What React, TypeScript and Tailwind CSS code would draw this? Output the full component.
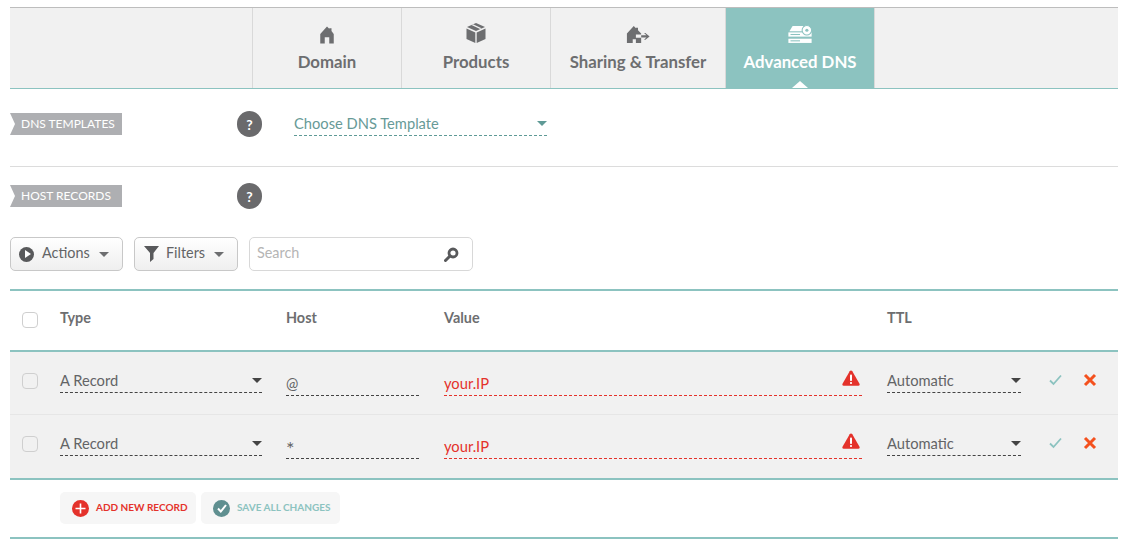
const teal = "#8cc3c0";

function HouseIcon() {
  return (
    <svg width="18" height="18" viewBox="0 0 16 16" fill="#6d6e70">
      <path d="M8 0.5 L10 2.5 V2 H12 V4.5 L14 7 V15.5 H10 V10 H6 V15.5 H2 V7 Z" />
    </svg>
  );
}

function BoxIcon() {
  return (
    <svg width="22" height="22" viewBox="0 0 22 22" fill="#6d6e70">
      <path d="M11 1 L20 5 L11 9 L2 5 Z" />
      <path d="M1.5 6.5 L10.3 10.4 V21 L1.5 17 Z" />
      <path d="M20.5 6.5 L11.7 10.4 V21 L20.5 17 Z" />
      <path d="M6.5 3 L15 7 L16.5 6.3 L8 2.3 Z" fill="#f1f1f1" />
    </svg>
  );
}

function TransferIcon() {
  return (
    <svg width="26" height="19" viewBox="0 0 24 18" fill="#6d6e70">
      <path d="M8 1 L10 3 V2.5 H12 V5 L15 8 V9 H10 V12 H15 V17 H10 V13.5 H7 V17 H1.5 V8 Z" />
      <path d="M15 9.8 H20 L17.7 7.5 H19 L23 10.8 L19 14 H17.7 L20 11.8 H15 Z" />
    </svg>
  );
}

function DnsIcon() {
  return (
    <svg width="26" height="19" viewBox="0 0 24 18" fill="#ffffff">
      <path d="M5 1 H15 L17 6 H2 Z" />
      <rect x="1" y="7" width="22" height="4" />
      <rect x="1" y="13" width="22" height="4" />
      <circle cx="18.5" cy="5" r="4.5" stroke={teal} strokeWidth="1" />
      <circle cx="18.5" cy="5" r="1.5" fill={teal} />
      <rect x="3" y="8.5" width="9" height="1" fill={teal} />
      <rect x="3" y="14.5" width="9" height="1" fill={teal} />
    </svg>
  );
}

function Caret({ className }: { className: string }) {
  return <span className={`h-0 w-0 border-x-[5px] border-t-[5px] border-x-transparent ${className}`} />;
}

function Tab({ label, icon, active, width }: { label: string; icon: React.ReactNode; active?: boolean; width: string }) {
  return (
    <div
      className={`relative flex h-full flex-col items-center border-r border-[#d9d9d9] ${width} ${
        active ? "bg-[#8cc3c0] text-white" : "text-[#6d6e70]"
      }`}
    >
      <div className="flex h-[36px] items-end justify-center">{icon}</div>
      <div className="mt-[8px] text-[16.8px] leading-[20px] font-bold whitespace-nowrap">{label}</div>
      {active && (
        <span className="absolute bottom-0 left-1/2 h-0 w-0 -translate-x-1/2 border-x-[8px] border-b-[7px] border-x-transparent border-b-white" />
      )}
    </div>
  );
}

function SectionLabel({ text, width }: { text: string; width: string }) {
  return (
    <div className={`relative flex h-[22px] items-center bg-[#aeafb2] pl-[11px] text-[12px] text-white ${width}`}>
      <span className="absolute top-0 left-0 h-0 w-0 border-y-[11px] border-l-[5px] border-y-transparent border-l-white" />
      {text}
    </div>
  );
}

function HelpBadge() {
  return (
    <div className="flex h-[26px] w-[25px] items-center justify-center rounded-full bg-[#6a6a6c] text-[14px] font-bold text-white">
      ?
    </div>
  );
}

function Checkbox() {
  return <div className="h-[16px] w-[16px] rounded-[4px] border border-[#cfcfcf] bg-transparent" />;
}

function WarnIcon() {
  return (
    <svg width="18" height="16" viewBox="0 0 18 16">
      <path d="M9 0.5 C9.6 0.5 10 0.8 10.3 1.3 L17.5 13.8 C18 14.8 17.4 15.8 16.4 15.8 H1.6 C0.6 15.8 0 14.8 0.5 13.8 L7.7 1.3 C8 0.8 8.4 0.5 9 0.5 Z" fill="#e4322b" />
      <rect x="8" y="4.5" width="2" height="6.5" rx="0.8" fill="#fff" />
      <rect x="8" y="12" width="2" height="2" rx="0.8" fill="#fff" />
    </svg>
  );
}

function RecordRow({ host, hostClass, border }: { host: string; hostClass: string; border?: boolean }) {
  return (
    <div className={`flex h-[63px] items-start ${border ? "border-b border-[#e6e6e6]" : ""}`}>
      <div className="flex w-[40px] justify-center pt-[21px]">
        <Checkbox />
      </div>
      <div className="mt-[18px] ml-[10px] flex h-[23px] w-[202px] items-start justify-between border-b border-dashed border-[#444]">
        <span className="text-[14.7px] leading-[20px] text-[#636466]">A Record</span>
        <Caret className="mt-[8px] border-t-[#444]" />
      </div>
      <div className="mt-[18px] ml-[24px] flex h-[26px] w-[133px] items-start border-b border-dashed border-[#444] text-[#636466]">
        <span className={hostClass}>{host}</span>
      </div>
      <div className="relative mt-[18px] ml-[25px] flex h-[26px] w-[418px] items-end border-b border-dashed border-[#e4322b] pb-[2px] text-[14.7px] leading-[20px] text-[#e4322b]">
        your.IP
        <span className="absolute top-0 right-[2px]">
          <WarnIcon />
        </span>
      </div>
      <div className="mt-[18px] ml-[25px] flex h-[23px] w-[134px] items-start justify-between border-b border-dashed border-[#444]">
        <span className="text-[14.7px] leading-[20px] text-[#636466]">Automatic</span>
        <Caret className="mt-[8px] border-t-[#444]" />
      </div>
      <div className="mt-[21px] ml-[28px] flex items-center gap-[21px]">
        <svg width="13" height="12" viewBox="0 0 13 12" fill="none" stroke={teal} strokeWidth="1.8">
          <path d="M1 6.5 L4.5 10 L12 1.5" />
        </svg>
        <svg width="14" height="14" viewBox="0 0 14 14" fill="none" stroke="#f4511e" strokeWidth="3">
          <path d="M2 2 L12 12 M12 2 L2 12" />
        </svg>
      </div>
    </div>
  );
}

export default function App() {
  return (
    <div className="h-[554px] w-[1128px] overflow-hidden bg-white pl-[10px] font-['Lato','Open_Sans',sans-serif] text-[#636466]">
      <div className="mt-[7px] flex h-[82px] w-[1108px] border-y border-t-[#bdbdbd] border-b-[#8cc3c0] bg-[#f1f1f1]">
        <div className="h-full w-[243px] border-r border-[#d9d9d9]" />
        <Tab label="Domain" icon={<HouseIcon />} width="w-[149px]" />
        <Tab label="Products" icon={<BoxIcon />} width="w-[149px]" />
        <Tab label="Sharing & Transfer" icon={<TransferIcon />} width="w-[175px]" />
        <Tab label="Advanced DNS" icon={<DnsIcon />} active width="w-[149px]" />
      </div>

      <div className="mt-[24px] flex h-[53px] w-[1108px] items-start">
        <SectionLabel text="DNS TEMPLATES" width="w-[112px]" />
        <div className="ml-[115px] -mt-[2px]">
          <HelpBadge />
        </div>
        <div className="ml-[32px] flex h-[23px] w-[253px] items-start justify-between border-b border-dashed border-[#5f9a96] text-[14.7px] leading-[20px] text-[#679a97]">
          Choose DNS Template
          <Caret className="mt-[8px] border-t-[#5f9a96]" />
        </div>
      </div>

      <div className="w-[1108px] border-t border-[#dcdcdc] pt-[18px]">
        <div className="flex items-start">
          <SectionLabel text="HOST RECORDS" width="w-[112px]" />
          <div className="ml-[115px] -mt-[2px]">
            <HelpBadge />
          </div>
        </div>
      </div>

      <div className="mt-[28px] flex items-center">
        <div className="flex h-[34px] w-[113px] items-center rounded-[5px] border border-[#c8c8c8] bg-gradient-to-b from-white to-[#efefef] pl-[8px] text-[14.4px]">
          <span className="flex h-[15px] w-[15px] items-center justify-center rounded-full bg-[#58595b]">
            <span className="ml-[2px] h-0 w-0 border-y-[4px] border-l-[6px] border-y-transparent border-l-white" />
          </span>
          <span className="mb-[3px] ml-[8px]">Actions</span>
          <Caret className="ml-[9px] border-t-[#6d6e70]" />
        </div>
        <div className="ml-[11px] flex h-[34px] w-[104px] items-center rounded-[5px] border border-[#c8c8c8] bg-gradient-to-b from-white to-[#efefef] pl-[9px] text-[14.4px]">
          <svg width="15" height="16" viewBox="0 0 15 16" fill="#58595b">
            <path d="M0 0 H15 L9.5 7 V13 L6 16 V7 Z" />
          </svg>
          <span className="mb-[3px] ml-[7px]">Filters</span>
          <Caret className="ml-[9px] border-t-[#6d6e70]" />
        </div>
        <div className="ml-[11px] flex h-[34px] w-[224px] items-center justify-between rounded-[5px] border border-[#d8d8d8] bg-white pr-[13px] pl-[7px] text-[14.4px] text-[#b5b5b5]">
          <span className="mb-[3px]">Search</span>
          <svg width="15" height="15" viewBox="0 0 15 15" fill="none" stroke="#58595b">
            <circle cx="9" cy="6" r="4" strokeWidth="2.8" />
            <path d="M5.5 9.5 L1.5 13.5" strokeWidth="3" strokeLinecap="round" />
          </svg>
        </div>
      </div>

      <div className="mt-[18px] w-[1108px] border-t-2 border-[#8cc3c0]">
        <div className="flex h-[59px] items-center text-[14.4px] font-bold text-[#6d6e70]">
          <div className="mb-[2px] flex w-[40px] justify-center">
            <Checkbox />
          </div>
          <div className="mb-[6px] ml-[10px] w-[226px]">Type</div>
          <div className="mb-[6px] w-[158px]">Host</div>
          <div className="mb-[6px] w-[443px]">Value</div>
          <div className="mb-[6px]">TTL</div>
        </div>
        <div className="border-y-2 border-[#8cc3c0] bg-[#f1f1f1]">
          <RecordRow host="@" hostClass="pt-[3px] text-[14.7px] leading-[20px]" border />
          <RecordRow host="*" hostClass="pt-[5px] text-[20px] leading-[20px]" />
        </div>
        <div className="flex h-[57px] items-start pt-[12px] pl-[50px]">
          <div className="flex h-[32px] w-[136px] items-center rounded-[5px] bg-[#f6f6f6] pl-[12px] text-[10px] font-bold text-[#e4322b]">
            <span className="flex h-[17px] w-[17px] items-center justify-center rounded-full bg-[#e4322b]">
              <svg width="11" height="11" viewBox="0 0 11 11" stroke="#fff" strokeWidth="1.6">
                <path d="M5.5 0.5 V10.5 M0.5 5.5 H10.5" />
              </svg>
            </span>
            <span className="mb-[2px] ml-[7px]">ADD NEW RECORD</span>
          </div>
          <div className="ml-[5px] flex h-[32px] w-[139px] items-center rounded-[5px] bg-[#f6f6f6] pl-[12px] text-[10px] font-bold text-[#8cc3c0]">
            <span className="flex h-[17px] w-[17px] items-center justify-center rounded-full bg-[#5f8f90]">
              <svg width="10" height="9" viewBox="0 0 10 9" fill="none" stroke="#fff" strokeWidth="2">
                <path d="M1 4.5 L3.8 7.5 L9 1" />
              </svg>
            </span>
            <span className="mb-[2px] ml-[7px]">SAVE ALL CHANGES</span>
          </div>
        </div>
        <div className="border-t-2 border-[#8cc3c0]" />
      </div>
    </div>
  );
}
